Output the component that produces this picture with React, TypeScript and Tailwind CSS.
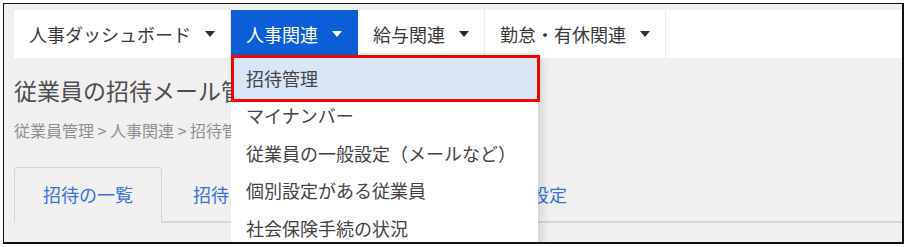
import React from 'react';

const navItems = [
  { label: '人事ダッシュボード', active: false },
  { label: '人事関連', active: true },
  { label: '給与関連', active: false },
  { label: '勤怠・有休関連', active: false },
];

const menuItems = [
  '招待管理',
  'マイナンバー',
  '従業員の一般設定（メールなど）',
  '個別設定がある従業員',
  '社会保険手続の状況',
];

const tabs = ['招待の一覧', '招待メールの一括送信', '招待メール設定'];

const Caret = ({ white }: { white?: boolean }) => (
  <span
    className={`inline-block w-0 h-0 border-l-[5.5px] border-r-[5.5px] border-t-[6px] border-l-transparent border-r-transparent ${
      white ? 'border-t-white' : 'border-t-[#2f2f2f]'
    }`}
  />
);

export default function App() {
  return (
    <div
      className="w-[905px] h-[247px] bg-white pt-[3px] pl-[3px]"
      style={{ fontFamily: '"Noto Sans CJK JP", "Noto Sans", sans-serif' }}
    >
      <div className="relative w-[901px] h-[241px] border-l border-t border-r-2 border-b-2 border-[#111] bg-[#f0f0f0] overflow-hidden">
        {/* top navigation */}
        <nav className="mt-[6px] ml-[10px] h-[48px] bg-white flex">
          {navItems.map((item) => (
            <div
              key={item.label}
              className={`flex items-center gap-[14px] px-[15px] text-[18px] leading-none ${
                item.active
                  ? 'bg-[#0b5ed7] text-white border-r border-[#0b5ed7]'
                  : 'text-[#3a3a3a] border-r border-[#ebebeb]'
              }`}
            >
              <span>{item.label}</span>
              <Caret white={item.active} />
            </div>
          ))}
        </nav>

        {/* page heading */}
        <div className="pl-[10px]">
          <h1 className="mt-[17px] h-[30px] leading-[30px] text-[23px] text-[#4d4d4d] whitespace-nowrap">
            従業員の招待メール管理
          </h1>
          <div className="mt-[15px] h-[20px] leading-[20px] text-[16px] text-[#8f8f8f] whitespace-nowrap">
            従業員管理 &gt; 人事関連 &gt; 招待管理
          </div>

          {/* tabs */}
          <div className="mt-[27px] flex border-b-2 border-[#d6d6d6]">
            {tabs.map((tab, i) => (
              <div
                key={tab}
                className={`h-[56px] -mb-[2px] px-[28px] pt-[15px] text-[18px] leading-[22px] text-[#3b6fd9] whitespace-nowrap rounded-t-[4px] border ${
                  i === 0
                    ? 'border-[#d6d6d6] border-b-transparent bg-[#f0f0f0]'
                    : i === 1
                    ? 'border-transparent ml-[2px]'
                    : 'border-transparent ml-[10px]'
                }`}
              >
                {tab}
              </div>
            ))}
          </div>
        </div>

        {/* dropdown menu */}
        <div className="absolute top-[51px] left-[227px] w-[307px] h-[200px] bg-white pt-[4px] shadow-[6px_0_10px_-3px_rgba(0,0,0,0.14)]">
          <div className="absolute top-0 left-0 w-[309px] h-[47px] border-[3px] border-[#ff0000] bg-[#d9e6f8]" />
          {menuItems.map((label) => (
            <div
              key={label}
              className="relative h-[37.5px] flex items-center px-[15px] text-[18px] leading-none text-[#444] whitespace-nowrap"
            >
              {label}
            </div>
          ))}
        </div>
      </div>
    </div>
  );
}
